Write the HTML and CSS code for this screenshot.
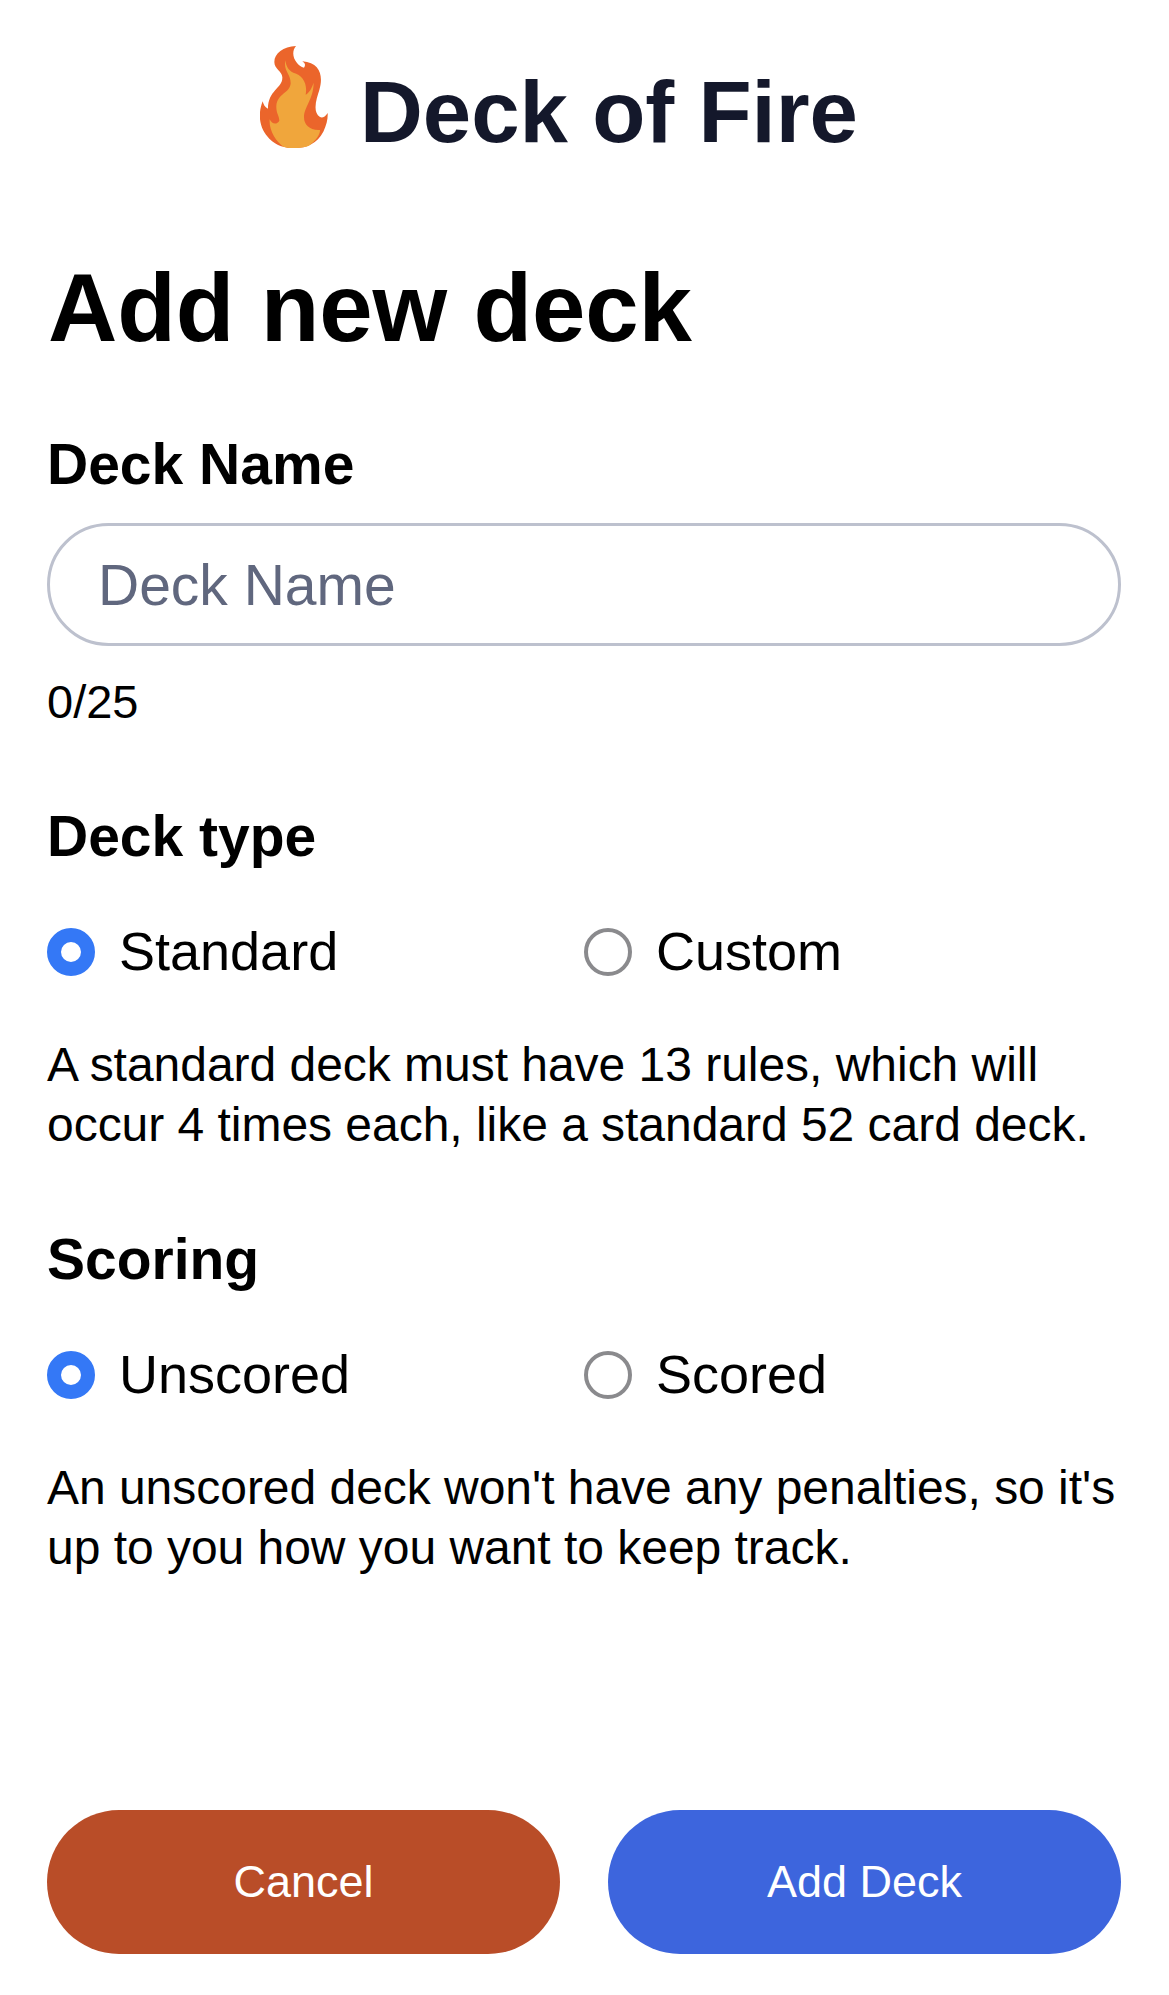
FILE: index.html
```html
<!DOCTYPE html>
<html lang="en">
<head>
<meta charset="utf-8">
<title>Deck of Fire</title>
<link rel="stylesheet" href="styles.css">
</head>
<body>
<header class="brand">
  <svg class="flame" viewBox="60 48 204 306" aria-hidden="true">
    <path fill="#eb652b" d="M168 48C130 50 103 70 103 96C103 118 126 122 127 142C128 175 84 180 84 236C74 232 70 222 68 214C50 260 62 300 88 326C110 348 135 354 164 354C200 354 232 340 250 305C260 285 264 265 263 249C255 262 246 264 240 261C216 246 230 205 238 180C250 140 242 98 187 94C196 100 197 106 192 113C168 106 148 72 168 48Z"/>
    <path fill="#f0a63c" d="M136 91C130 125 152 130 152 160C150 190 112 190 109 228C108 250 118 258 118 272C112 284 96 284 89 268C86 300 108 335 130 350C150 356 185 356 207 347C228 332 240 315 240 300C210 302 192 285 192 262C192 230 220 210 221 158C215 175 208 188 197 194C203 160 188 135 160 128C145 122 138 108 136 91Z"/>
  </svg>
  <span class="brand-name">Deck of Fire</span>
</header>
<main class="form">
  <h1 class="title">Add new deck</h1>
  <label class="label" for="name">Deck Name</label>
  <input class="name-input" id="name" type="text" placeholder="Deck Name" maxlength="25">
  <p class="counter">0/25</p>
  <section class="type">
    <h2 class="label">Deck type</h2>
    <div class="options">
      <label class="option"><input class="radio" type="radio" name="type" checked><span class="option-text">Standard</span></label>
      <label class="option"><input class="radio" type="radio" name="type"><span class="option-text">Custom</span></label>
    </div>
    <p class="hint">A standard deck must have 13 rules, which will<br>occur 4 times each, like a standard 52 card deck.</p>
  </section>
  <section class="scoring">
    <h2 class="label">Scoring</h2>
    <div class="options">
      <label class="option"><input class="radio" type="radio" name="score" checked><span class="option-text">Unscored</span></label>
      <label class="option"><input class="radio" type="radio" name="score"><span class="option-text">Scored</span></label>
    </div>
    <p class="hint">An unscored deck won't have any penalties, so it's<br>up to you how you want to keep track.</p>
  </section>
  <div class="actions">
    <button class="button cancel" type="button">Cancel</button>
    <button class="button add" type="button">Add Deck</button>
  </div>
</main>
</body>
</html>
```
FILE: styles.css
```css
* { box-sizing: border-box; }
body { margin: 0; background: #fff; color: #000; font-family: "Liberation Sans", Arial, sans-serif; }
h1, h2, p { margin: 0; }
.brand { display: flex; height: 224px; padding: 46px 0 0 260px; }
.flame { flex: none; width: 68px; height: 102px; }
.brand-name { margin: 16px 0 0 32px; font-size: 87px; line-height: 100px; font-weight: 700; color: #14182b; white-space: nowrap; }
.form { height: 1771px; padding: 34px 48px 0 47px; }
.title { padding-left: 1px; font-size: 96px; line-height: 100px; font-weight: 700; letter-spacing: -.15px; }
.label { display: block; padding-bottom: 2px; font-size: 57px; line-height: 62px; font-weight: 700; white-space: nowrap; }
.title + .label { margin-top: 75px; }
.name-input { display: block; width: 100%; height: 123px; margin-top: 26px; padding: 0 48px; border: 3px solid #bdc1ce; border-radius: 62px; background: #fff; font: 57px "Liberation Sans", Arial, sans-serif; outline: none; }
.name-input::placeholder { color: #60677e; opacity: 1; }
.counter { margin-top: 26px; font-size: 47px; line-height: 60px; }
.type, .scoring { margin-top: 73px; }
.options { display: grid; grid-template-columns: 1fr 1fr; margin-top: 51px; }
.option { display: flex; align-items: center; gap: 24px; height: 64px; font-size: 54px; line-height: 62px; white-space: nowrap; }
.option-text { padding-bottom: 2px; }
.radio { appearance: none; flex: none; width: 48px; height: 48px; margin: 0; border: 4px solid #8a8a8d; border-radius: 50%; background: #fff; }
.radio:checked { border: 14px solid #3478f6; }
.hint { margin-top: 51px; font-size: 48px; line-height: 60px; letter-spacing: -.03px; white-space: nowrap; }
.actions { display: grid; grid-template-columns: 1fr 1fr; gap: 48px; margin-top: 232px; }
.button { height: 144px; border: 0; border-radius: 72px; color: #fff; font: 45px "Liberation Sans", Arial, sans-serif; }
.cancel { background: #b94d28; }
.add { background: #3d65dd; }
```
